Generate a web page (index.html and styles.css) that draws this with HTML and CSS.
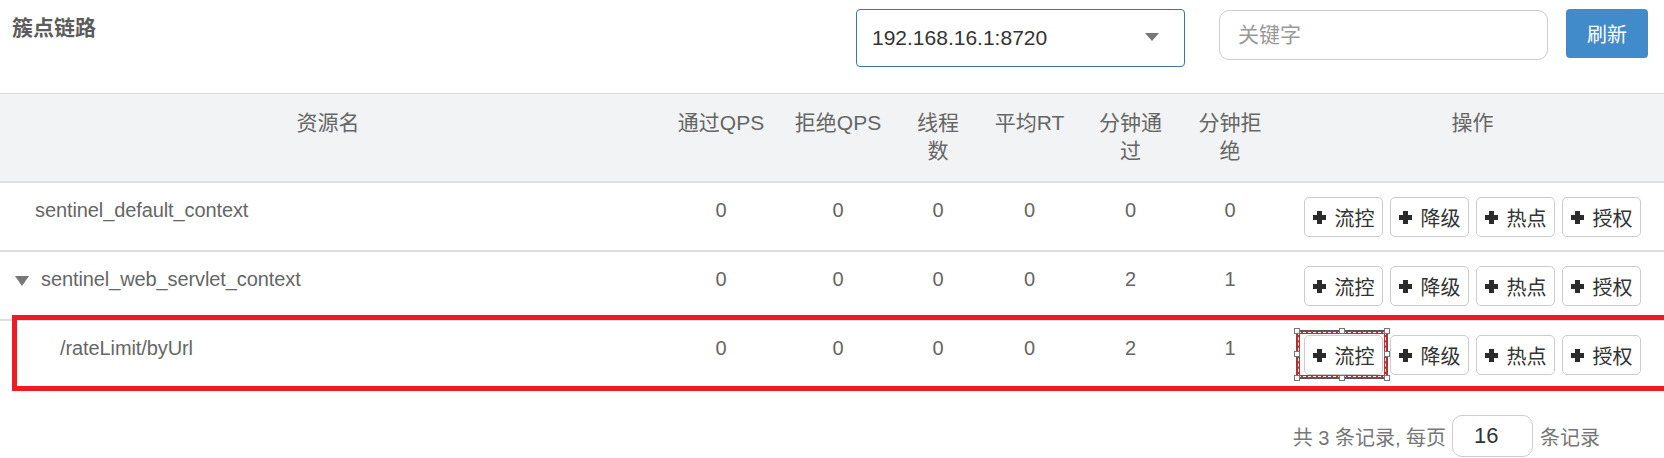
FILE: index.html
```html
<!DOCTYPE html>
<html lang="zh-CN">
<head>
<meta charset="utf-8">
<title>簇点链路</title>
<link rel="stylesheet" href="styles.css">
</head>
<body>
<div class="topbar">
  <div class="title">簇点链路</div>
  <div class="select"><span>192.168.16.1:8720</span><span class="caret"></span></div>
  <input class="keyword" type="text" placeholder="关键字">
  <button class="refresh">刷新</button>
</div>

<div class="table">
  <div class="thead">
    <div class="th">资源名</div>
    <div class="th">通过QPS</div>
    <div class="th">拒绝QPS</div>
    <div class="th">线程<br>数</div>
    <div class="th">平均RT</div>
    <div class="th">分钟通<br>过</div>
    <div class="th">分钟拒<br>绝</div>
    <div class="th th-ops">操作</div>
  </div>

  <div class="row">
    <div class="td name lvl0">sentinel_default_context</div>
    <div class="td">0</div><div class="td">0</div><div class="td">0</div><div class="td">0</div><div class="td">0</div><div class="td">0</div>
    <div class="ops">
      <button class="btn"><svg class="plus" viewBox="0 0 13 13"><path d="M4 0h5v4h4v5H9v4H4V9H0V4h4z"/></svg>流控</button>
      <button class="btn"><svg class="plus" viewBox="0 0 13 13"><path d="M4 0h5v4h4v5H9v4H4V9H0V4h4z"/></svg>降级</button>
      <button class="btn"><svg class="plus" viewBox="0 0 13 13"><path d="M4 0h5v4h4v5H9v4H4V9H0V4h4z"/></svg>热点</button>
      <button class="btn"><svg class="plus" viewBox="0 0 13 13"><path d="M4 0h5v4h4v5H9v4H4V9H0V4h4z"/></svg>授权</button>
    </div>
  </div>

  <div class="row">
    <div class="td name lvl1"><span class="tri"></span>sentinel_web_servlet_context</div>
    <div class="td">0</div><div class="td">0</div><div class="td">0</div><div class="td">0</div><div class="td">2</div><div class="td">1</div>
    <div class="ops">
      <button class="btn"><svg class="plus" viewBox="0 0 13 13"><path d="M4 0h5v4h4v5H9v4H4V9H0V4h4z"/></svg>流控</button>
      <button class="btn"><svg class="plus" viewBox="0 0 13 13"><path d="M4 0h5v4h4v5H9v4H4V9H0V4h4z"/></svg>降级</button>
      <button class="btn"><svg class="plus" viewBox="0 0 13 13"><path d="M4 0h5v4h4v5H9v4H4V9H0V4h4z"/></svg>热点</button>
      <button class="btn"><svg class="plus" viewBox="0 0 13 13"><path d="M4 0h5v4h4v5H9v4H4V9H0V4h4z"/></svg>授权</button>
    </div>
  </div>

  <div class="row row-marked">
    <div class="redbox"></div>
    <div class="td name lvl2">/rateLimit/byUrl</div>
    <div class="td">0</div><div class="td">0</div><div class="td">0</div><div class="td">0</div><div class="td">2</div><div class="td">1</div>
    <div class="ops">
      <button class="btn btn-sel"><svg class="plus" viewBox="0 0 13 13"><path d="M4 0h5v4h4v5H9v4H4V9H0V4h4z"/></svg>流控
        <span class="sel">
          <span class="dash"></span>
          <span class="h h-tl"></span><span class="h h-tc"></span><span class="h h-tr"></span>
          <span class="h h-ml"></span><span class="h h-mr"></span>
          <span class="h h-bl"></span><span class="h h-bc"></span><span class="h h-br"></span>
        </span>
      </button>
      <button class="btn"><svg class="plus" viewBox="0 0 13 13"><path d="M4 0h5v4h4v5H9v4H4V9H0V4h4z"/></svg>降级</button>
      <button class="btn"><svg class="plus" viewBox="0 0 13 13"><path d="M4 0h5v4h4v5H9v4H4V9H0V4h4z"/></svg>热点</button>
      <button class="btn"><svg class="plus" viewBox="0 0 13 13"><path d="M4 0h5v4h4v5H9v4H4V9H0V4h4z"/></svg>授权</button>
    </div>
  </div>
</div>

<div class="pager">
  <span>共 3 条记录, 每页</span>
  <div class="pagesize">16</div>
  <span>条记录</span>
</div>
</body>
</html>
```

FILE: styles.css
```css
html, body {
  margin: 0;
  padding: 0;
  overflow: hidden;
  background: #fff;
}
body {
  font-family: "Liberation Sans", "Noto Sans CJK SC", sans-serif;
  color: #666;
  font-size: 20px;
}

/* top bar */
.topbar {
  display: flex;
  align-items: flex-start;
  height: 93px;
  padding-right: 16px;
}
.title {
  flex: 1;
  margin: 13px 0 0 12px;
  font-size: 21px;
  font-weight: bold;
  line-height: 30px;
  color: #5c5c5c;
}
.select {
  box-sizing: border-box;
  margin-top: 9px;
  width: 329px;
  height: 58px;
  border: 1px solid #3c74ae;
  border-radius: 4px;
  display: flex;
  align-items: center;
  justify-content: space-between;
  padding: 0 25px 0 15px;
  font-size: 21px;
  color: #333;
}
.caret {
  width: 0;
  height: 0;
  border-left: 7px solid transparent;
  border-right: 7px solid transparent;
  border-top: 8px solid #777;
  margin-top: -2px;
}
.keyword {
  box-sizing: border-box;
  margin: 10px 0 0 34px;
  width: 329px;
  height: 50px;
  border: 1px solid #ccc;
  border-radius: 10px;
  padding: 0 0 0 18px;
  font-family: "Liberation Sans", "Noto Sans CJK SC", sans-serif;
  font-size: 21px;
  color: #333;
  outline: none;
}
.keyword::placeholder {
  color: #999;
}
.refresh {
  margin: 9px 0 0 18px;
  width: 82px;
  height: 49px;
  border: none;
  border-radius: 4px;
  background: #428bca;
  color: #fff;
  font-family: "Liberation Sans", "Noto Sans CJK SC", sans-serif;
  font-size: 20px;
  padding: 0;
}

/* table */
.thead, .row {
  display: grid;
  grid-template-columns: 656px 130px 104px 96px 87px 115px 84px 1fr;
}
.thead {
  background: #f2f3f5;
  border-top: 1px solid #dcdcdc;
  border-bottom: 2px solid #ddd;
}
.th {
  padding: 15px 0 16px;
  line-height: 28px;
  font-size: 21px;
  text-align: center;
  color: #666;
}
.th-ops {
  padding-left: 9px;
}
.row {
  position: relative;
  height: 67px;
  border-bottom: 2px solid #ddd;
}
.row-marked {
  border-bottom-color: transparent;
}
.td {
  padding-top: 12px;
  line-height: 30px;
  text-align: center;
  color: #666;
}
.name {
  text-align: left;
  display: flex;
  align-items: center;
  height: 30px;
  letter-spacing: -0.1px;
}
.lvl0 { padding-left: 35px; }
.lvl1 { padding-left: 15px; }
.lvl2 { padding-left: 60px; }
.tri {
  width: 0;
  height: 0;
  border-left: 7px solid transparent;
  border-right: 7px solid transparent;
  border-top: 10px solid #777;
  margin-right: 12px;
  margin-top: 4px;
}
.ops {
  padding: 14px 0 0 9px;
  display: flex;
  justify-content: center;
  align-items: flex-start;
  gap: 7px;
}
.btn {
  position: relative;
  box-sizing: border-box;
  width: 79px;
  height: 40px;
  border: 1px solid #ccc;
  border-radius: 5px;
  background: #fff;
  color: #333;
  font-family: "Liberation Sans", "Noto Sans CJK SC", sans-serif;
  font-size: 20px;
  padding: 0;
  display: flex;
  align-items: center;
  justify-content: center;
  gap: 9px;
}
.plus {
  width: 13px;
  height: 13px;
  fill: #2b2b2b;
  flex: none;
}

/* annotation overlays */
.redbox {
  position: absolute;
  left: 12px;
  top: -6px;
  right: -20px;
  height: 76px;
  box-sizing: border-box;
  border: 5px solid #ed1c24;
  pointer-events: none;
}
.sel {
  position: absolute;
  left: -9px;
  top: -6px;
  width: 92px;
  height: 49px;
  box-sizing: border-box;
  border: 1px solid #555;
}
.sel::before {
  content: "";
  position: absolute;
  inset: 0;
  border: 3px solid #e81d25;
}
.dash {
  position: absolute;
  inset: 1px;
  border: 1px dashed #fff;
}
.h {
  position: absolute;
  width: 4px;
  height: 4px;
  background: #fff;
  border: 1px solid #777;
}
.h-tl { left: -3px; top: -3px; }
.h-tc { left: 42px; top: -3px; }
.h-tr { right: -3px; top: -3px; }
.h-ml { left: -3px; top: 20px; }
.h-mr { right: -3px; top: 20px; }
.h-bl { left: -3px; bottom: -3px; }
.h-bc { left: 42px; bottom: -3px; }
.h-br { right: -3px; bottom: -3px; }

/* pager */
.pager {
  display: flex;
  justify-content: flex-end;
  align-items: center;
  margin-top: 25px;
  padding-right: 64px;
  font-size: 20px;
  color: #777;
}
.pagesize {
  box-sizing: border-box;
  width: 81px;
  height: 42px;
  margin: 0 7px 0 6px;
  border: 1px solid #ccc;
  border-radius: 10px;
  padding-left: 21px;
  line-height: 40px;
  font-size: 22px;
  color: #333;
}
```
